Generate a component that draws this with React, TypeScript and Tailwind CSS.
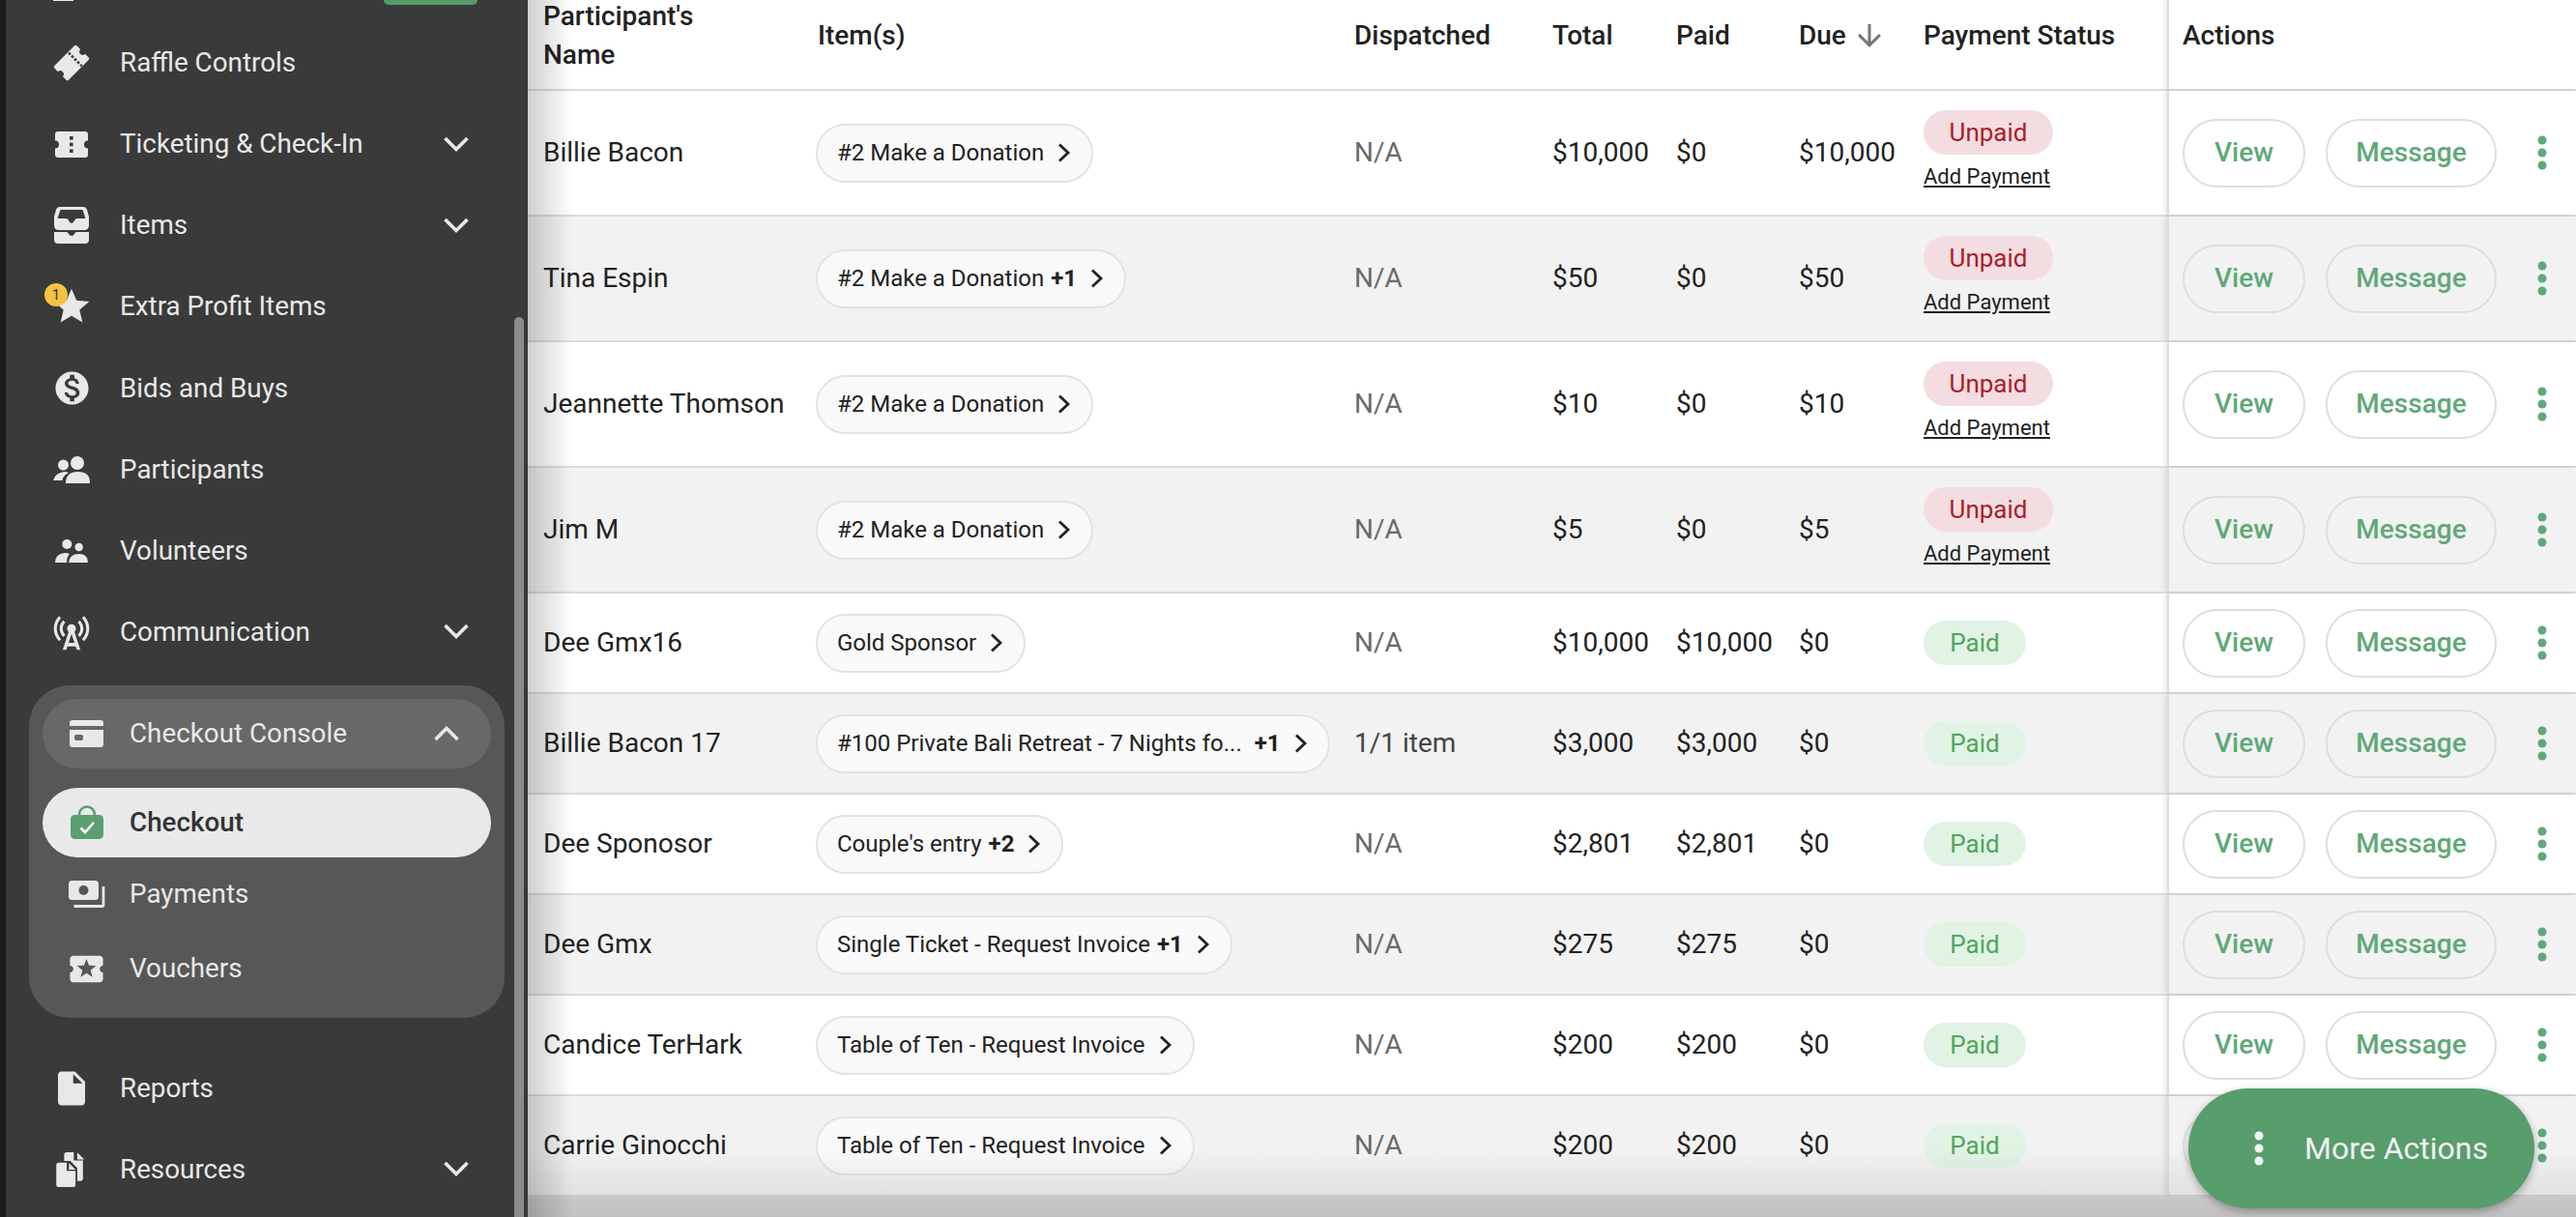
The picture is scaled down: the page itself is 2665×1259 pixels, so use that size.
import React from "react";
import { MdStar, MdMonetizationOn, MdCellTower, MdLocalActivity, MdInsertDriveFile, MdArrowDownward } from "react-icons/md";

const C = "#e8e8e8";

const Chevron = ({ up = false }: { up?: boolean }) => (
  <svg width="26" height="17" viewBox="0 0 26 17" fill="none" stroke={C} strokeWidth="3.6">
    <polyline points={up ? "1.5,15 13,3.5 24.5,15" : "1.5,2 13,13.5 24.5,2"} />
  </svg>
);

const PillChevron = () => (
  <svg width="14" height="20" viewBox="0 0 14 20" fill="none" stroke="#222" strokeWidth="2.8" className="shrink-0">
    <polyline points="2,1.5 11,10 2,18.5" />
  </svg>
);

const Dots = ({ color }: { color: string }) => (
  <svg width="10" height="36" viewBox="0 0 10 36" fill={color}>
    <circle cx="5" cy="5" r="4.5" />
    <circle cx="5" cy="18" r="4.5" />
    <circle cx="5" cy="31" r="4.5" />
  </svg>
);

const RaffleIcon = () => (
  <svg width="38" height="38" viewBox="0 0 44 44" className="-rotate-45">
    <path fill={C} d="M5 10H39a2 2 0 0 1 2 2V18a4 4 0 0 0 0 8V32a2 2 0 0 1-2 2H5a2 2 0 0 1-2-2V26a4 4 0 0 0 0-8V12a2 2 0 0 1 2-2z" />
    <g fill="#3a3a3a">
      <rect x="26.5" y="11" width="3" height="3" />
      <rect x="26.5" y="16" width="3" height="3" />
      <rect x="26.5" y="21" width="3" height="3" />
      <rect x="26.5" y="26" width="3" height="3" />
      <rect x="26.5" y="31" width="3" height="2.5" />
    </g>
  </svg>
);

const TicketIcon = () => (
  <svg width="34" height="27" viewBox="0 0 34 27">
    <path fill={C} d="M3 0H31a3 3 0 0 1 3 3V9.5a4 4 0 0 0 0 8V24a3 3 0 0 1-3 3H3a3 3 0 0 1-3-3V17.5a4 4 0 0 0 0-8V3a3 3 0 0 1 3-3z" />
    <g fill="#3a3a3a">
      <rect x="15" y="5" width="3.6" height="3.6" />
      <rect x="15" y="11.7" width="3.6" height="3.6" />
      <rect x="15" y="18.4" width="3.6" height="3.6" />
    </g>
  </svg>
);

const InboxIcon = () => (
  <svg width="36" height="38" viewBox="0 0 36 38" fill={C}>
    <path fillRule="evenodd" d="M6 0H30Q33 0 34 3L36 10V19Q36 24 31 24H5Q0 24 0 19V10L2 3Q3 0 6 0ZM6.5 3L3.5 12H12Q14 12 15 14Q16 17 18 17Q20 17 21 14Q22 12 24 12H32.5L29.5 3Z" />
    <path d="M0 26H13Q14 26 15 28Q16 30 18 30Q20 30 21 28Q22 26 23 26H36V34Q36 38 32 38H4Q0 38 0 34Z" />
  </svg>
);

const ParticipantsIcon = () => (
  <svg width="38" height="28" viewBox="0 0 38 28" fill={C}>
    <circle cx="25" cy="7" r="7" />
    <circle cx="10.5" cy="9" r="5.5" />
    <path d="M13 28Q13 16 25.5 16Q38 16 38 27V28Z" />
    <path d="M0 25Q2 17 12 16Q14 16 16 17Q10 20 9.5 25Z" />
  </svg>
);

const VolunteersIcon = () => (
  <svg width="34" height="24" viewBox="0 0 34 24" fill={C}>
    <circle cx="12.3" cy="5" r="5" />
    <circle cx="24.7" cy="8" r="4.2" />
    <path d="M0 24Q0 15 10 14Q13 14 15 15Q12 18 12 24Z" />
    <path d="M14 24Q15 15 24.5 15Q34 15 34 24Z" />
  </svg>
);

const CardIcon = () => (
  <svg width="35" height="28" viewBox="0 0 35 28" fill={C}>
    <path d="M3 0H32Q35 0 35 3V6H0V3Q0 0 3 0Z" />
    <path fillRule="evenodd" d="M0 10H35V25Q35 28 32 28H3Q0 28 0 25ZM7 15Q5 15 5 17V19Q5 21 7 21H12Q14 21 14 19V17Q14 15 12 15Z" />
  </svg>
);

const BagCheck = () => (
  <svg width="34" height="35" viewBox="0 0 34 35">
    <path d="M9 11V9.5a8 8 0 0 1 16 0V11" fill="none" stroke="#5aa06f" strokeWidth="2.6" />
    <rect x="0" y="10" width="34" height="25" rx="4.5" fill="#5aa06f" />
    <polyline points="10.5,23.5 15,28 24,18" fill="none" stroke="#fff" strokeWidth="2.6" />
  </svg>
);

const PaymentsIcon = () => (
  <svg width="38" height="28" viewBox="0 0 38 28">
    <rect x="0" y="0" width="31" height="20" rx="3.5" fill={C} />
    <circle cx="15.5" cy="10" r="5" fill="#575757" />
    <path d="M36 6V25.5a1 1 0 0 1-1 1H5.5" fill="none" stroke={C} strokeWidth="2.8" />
  </svg>
);

const Files = () => (
  <svg width="33" height="38" viewBox="0 0 36 42" fill={C}>
    <path d="M12 1h8v9.5h10.5V31a3 3 0 0 1-3 3H24V19l-8-8H9V4a3 3 0 0 1 3-3z" />
    <path d="M24 1.5l8 8h-8z" />
    <path d="M3 13h9v9.5h10V38a3 3 0 0 1-3 3H3a3 3 0 0 1-3-3V16a3 3 0 0 1 3-3z" />
    <path d="M14.5 13.5l7.5 7.5h-7.5z" />
  </svg>
);

type NavProps = { icon: React.ReactNode; label: string; chevron?: boolean };

const NavRow = ({ icon, label, chevron }: NavProps) => (
  <div className="flex h-[84.1px] items-center text-[27.8px] text-[#e8e8e8]">
    <div className="flex w-[119px] shrink-0 justify-center pl-[17px]">
      <div className="relative flex h-[44px] w-[44px] items-center justify-center">{icon}</div>
    </div>
    <span className="-ml-[1px] flex-1">{label}</span>
    {chevron && <span className="mr-[61px] flex"><Chevron /></span>}
  </div>
);

const SubRow = ({ icon, label }: { icon: React.ReactNode; label: string }) => (
  <div className="mx-[14px] flex h-[77px] items-center text-[27.8px] text-[#e8e8e8]">
    <div className="flex w-[91px] shrink-0 justify-center">
      <div className="flex h-[44px] w-[44px] items-center justify-center">{icon}</div>
    </div>
    <span className="-ml-[1px]">{label}</span>
  </div>
);

const Sidebar = () => (
  <aside className="relative h-full w-[540px] shrink-0 overflow-hidden bg-[#3a3a3a]">
    <div className="flex h-[23px] items-start justify-between pl-[49px] pr-[52px]">
      <div className="h-[1px] w-[21px] bg-[#e8e8e8]" />
      <div className="h-[5px] w-[97px] rounded-b-[14px] bg-[#569b6a]" />
    </div>
    <NavRow label="Raffle Controls" icon={<RaffleIcon />} />
    <NavRow label="Ticketing & Check-In" chevron icon={<TicketIcon />} />
    <NavRow label="Items" chevron icon={<InboxIcon />} />
    <NavRow
      label="Extra Profit Items"
      icon={
        <>
          <MdStar size={44} color={C} />
          <span className="absolute left-[-6px] top-[-2px] flex h-[24px] w-[24px] items-center justify-center rounded-full bg-[#f5c242] text-[15px] text-[#333]">1</span>
        </>
      }
    />
    <NavRow label="Bids and Buys" icon={<MdMonetizationOn size={41} color={C} />} />
    <NavRow label="Participants" icon={<ParticipantsIcon />} />
    <NavRow label="Volunteers" icon={<VolunteersIcon />} />
    <NavRow label="Communication" chevron icon={<MdCellTower size={44} color={C} />} />

    <section className="ml-[24px] mt-[13px] w-[492px] rounded-[42px] bg-[#575757] pb-[12px] pt-[14px]">
      <div className="mx-[14px] flex h-[72px] items-center rounded-full bg-[#686868] text-[27.8px] text-[#e8e8e8]">
        <div className="flex w-[91px] shrink-0 justify-center"><CardIcon /></div>
        <span className="-ml-[1px] flex-1">Checkout Console</span>
        <span className="mr-[33px] flex"><Chevron up /></span>
      </div>
      <div className="mx-[14px] mt-[20px] flex h-[72px] items-center rounded-full bg-[#e9e9e9] text-[27.8px] font-medium text-[#333]">
        <div className="flex w-[91px] shrink-0 justify-center"><BagCheck /></div>
        <span className="-ml-[1px]">Checkout</span>
      </div>
      <SubRow label="Payments" icon={<PaymentsIcon />} />
      <SubRow label="Vouchers" icon={<MdLocalActivity size={41} color={C} />} />
    </section>

    <div className="mt-[31px]">
      <NavRow label="Reports" icon={<MdInsertDriveFile size={42} color={C} />} />
      <NavRow label="Resources" chevron icon={<Files />} />
    </div>
    <div className="absolute bottom-0 right-[4px] top-[328px] w-[10px] rounded-t-full bg-[#8c8c8c]" />
  </aside>
);

type Row = { name: string; item: string; extra?: string; disp?: string; total: string; paid: string; due: string; unpaid?: boolean; wide?: boolean };

const rows: Row[] = [
  { name: "Billie Bacon", item: "#2 Make a Donation", total: "$10,000", paid: "$0", due: "$10,000", unpaid: true },
  { name: "Tina Espin", item: "#2 Make a Donation", extra: "+1", total: "$50", paid: "$0", due: "$50", unpaid: true },
  { name: "Jeannette Thomson", item: "#2 Make a Donation", total: "$10", paid: "$0", due: "$10", unpaid: true },
  { name: "Jim M", item: "#2 Make a Donation", total: "$5", paid: "$0", due: "$5", unpaid: true },
  { name: "Dee Gmx16", item: "Gold Sponsor", total: "$10,000", paid: "$10,000", due: "$0" },
  { name: "Billie Bacon 17", item: "#100 Private Bali Retreat - 7 Nights fo...", extra: "+1", disp: "1/1 item", total: "$3,000", paid: "$3,000", due: "$0", wide: true },
  { name: "Dee Sponosor", item: "Couple's entry", extra: "+2", total: "$2,801", paid: "$2,801", due: "$0" },
  { name: "Dee Gmx", item: "Single Ticket - Request Invoice", extra: "+1", total: "$275", paid: "$275", due: "$0" },
  { name: "Candice TerHark", item: "Table of Ten - Request Invoice", total: "$200", paid: "$200", due: "$0" },
  { name: "Carrie Ginocchi", item: "Table of Ten - Request Invoice", total: "$200", paid: "$200", due: "$0" },
];

const TableRow = ({ r, i }: { r: Row; i: number }) => (
  <div className={`flex border-b-2 border-[#dcdcdc] text-[28px] text-[#222] ${r.unpaid ? "h-[130px]" : "h-[104px]"} ${i % 2 ? "bg-[#f2f2f2]" : "bg-white"}`}>
    <div className="flex w-[298px] items-center pl-[16px]">{r.name}</div>
    <div className="flex w-[557px] items-center">
      <div className="flex h-[61px] items-center gap-[14px] rounded-full border-2 border-[#e3e3e3] bg-[#f9f9f9] pl-[20px] pr-[21px] text-[24px]">
        <span className="whitespace-nowrap">
          {r.item}
          {r.extra && <b className={`font-bold ${r.wide ? "ml-[13px]" : "ml-[7px]"}`}>{r.extra}</b>}
        </span>
        <PillChevron />
      </div>
    </div>
    <div className={`flex w-[205px] items-center ${r.disp ? "text-[#444]" : "text-[#6a6a6a]"}`}>{r.disp ?? "N/A"}</div>
    <div className="flex w-[128px] items-center">{r.total}</div>
    <div className="flex w-[127px] items-center">{r.paid}</div>
    <div className="flex w-[129px] items-center">{r.due}</div>
    <div className="flex w-[252px] flex-col items-start justify-center">
      {r.unpaid ? (
        <>
          <span className="mt-[-4px] flex h-[46px] w-[134px] items-center justify-center rounded-full bg-[#f3dde0] text-[26px] text-[#a91e2c]">Unpaid</span>
          <span className="mt-[8px] text-[22px] leading-[30px] underline">Add Payment</span>
        </>
      ) : (
        <span className="flex h-[46px] w-[106px] items-center justify-center rounded-full bg-[#e1f3e4] text-[26px] text-[#4fa65b]">Paid</span>
      )}
    </div>
    <div className="flex w-[423px] items-center border-l-2 border-[#dcdcdc] pl-[14px] shadow-[-3px_0_4px_rgba(0,0,0,0.08)]">
      <button className="h-[71px] w-[127px] rounded-full border-2 border-[#dedede] text-[28px] font-medium text-[#60a878]">View</button>
      <button className="ml-[21px] h-[71px] w-[177px] rounded-full border-2 border-[#dedede] text-[28px] font-medium text-[#60a878]">Message</button>
      <span className="ml-[42px] flex"><Dots color="#60a878" /></span>
    </div>
  </div>
);

const Header = () => (
  <div className="flex h-[94px] border-b-2 border-[#dcdcdc] bg-white text-[28px] font-medium leading-[40px] text-[#222]">
    <div className="w-[298px] pl-[16px]"><div className="-mt-[3px]">Participant's<br />Name</div></div>
    <div className="w-[557px] pl-[2px] pt-[17px]">Item(s)</div>
    <div className="w-[205px] pt-[17px]">Dispatched</div>
    <div className="w-[128px] pt-[17px]">Total</div>
    <div className="w-[127px] pt-[17px]">Paid</div>
    <div className="flex w-[129px] items-start gap-[6px] pt-[17px]">Due <MdArrowDownward size={36} color="#777" className="mt-[2px] shrink-0" /></div>
    <div className="w-[252px] pt-[17px]">Payment Status</div>
    <div className="w-[423px] border-l-2 border-[#dcdcdc] pl-[14px] pt-[17px] shadow-[-3px_0_4px_rgba(0,0,0,0.08)]">Actions</div>
  </div>
);

export default function App() {
  return (
    <div className="flex h-[1259px] w-[2665px] overflow-hidden bg-[#1c1c1c] pl-[6px] [font-family:Roboto,sans-serif]">
      <Sidebar />
      <main className="relative h-full flex-1 overflow-hidden bg-[#d8d8d8]">
        <Header />
        {rows.map((r, i) => <TableRow key={r.name} r={r} i={i} />)}
        <div className="pointer-events-none absolute inset-y-0 left-0 w-[46px] bg-gradient-to-r from-[#00000030] to-transparent" />
        <div className="pointer-events-none absolute inset-x-0 bottom-0 h-[70px] bg-gradient-to-t from-[#0000001c] to-transparent" />
        <button className="absolute left-[1718px] top-[1126px] flex h-[124px] w-[358px] items-center rounded-full bg-[#589d6c] pl-[68px] text-[32px] text-[#f2f2f2] shadow-[0_3px_8px_rgba(0,0,0,0.3)]">
          <Dots color="#f2f2f2" />
          <span className="ml-[42px]">More Actions</span>
        </button>
      </main>
    </div>
  );
}
